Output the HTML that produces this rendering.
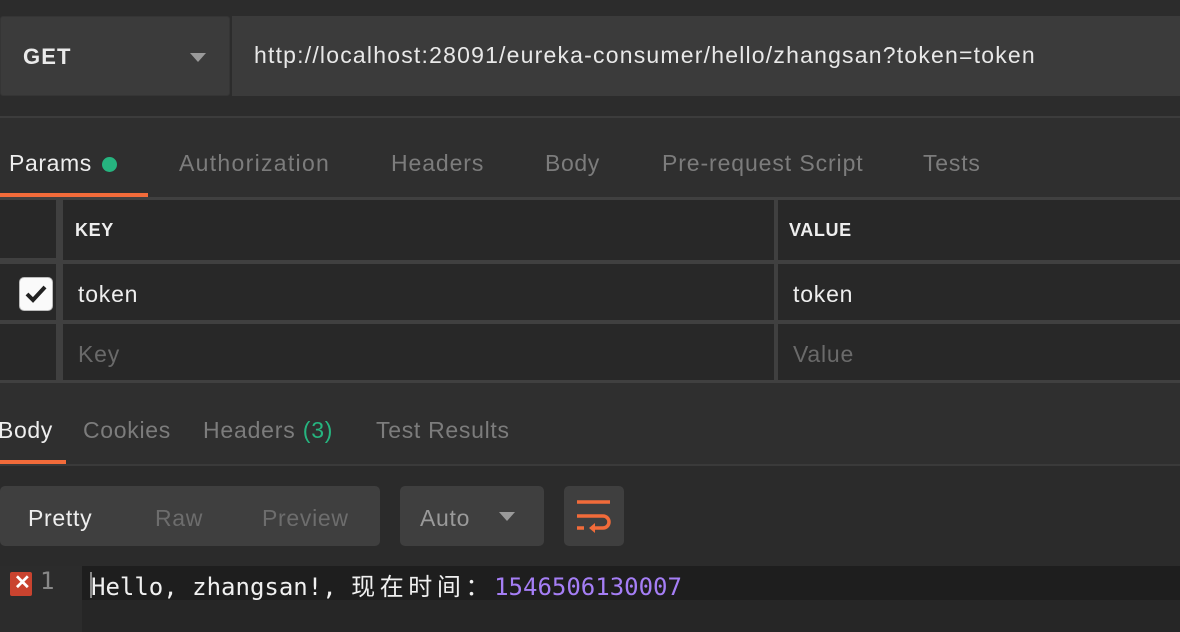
<!DOCTYPE html>
<html><head><meta charset="utf-8"><style>
*{margin:0;padding:0;box-sizing:border-box}
body{width:1180px;height:632px;background:#2f2f2f;font-family:"Liberation Sans","Noto Sans CJK SC",sans-serif;position:relative;overflow:hidden;color:#eee}
.a{position:absolute}
.t{position:absolute;font-size:23px;white-space:nowrap;letter-spacing:1.1px}
</style></head><body>
<div class="a" style="left:0;top:0;width:1180px;height:116px;background:#2c2c2c"></div>
<div class="a" style="left:0;top:16px;width:230px;height:80px;background:#3b3b3b;border:1px solid #353535;border-radius:3px"></div>
<div class="t" style="left:23px;top:44px;font-weight:bold;font-size:22px;color:#eaeaea">GET</div>
<div class="a" style="left:190px;top:53px;border-left:8px solid transparent;border-right:8px solid transparent;border-top:9px solid #9a9a9a"></div>
<div class="a" style="left:232px;top:16px;width:960px;height:80px;background:#3b3b3b"></div>
<div class="t" style="left:254px;top:42px;color:#e8e8e8;letter-spacing:1.2px">http://localhost:28091/eureka-consumer/hello/zhangsan?token=token</div>
<div class="a" style="left:0;top:116px;width:1180px;height:2px;background:#3c3c3c"></div>
<div class="t" style="left:9px;top:150px;color:#eee;letter-spacing:0.6px">Params</div>
<div class="a" style="left:102px;top:157px;width:15px;height:15px;border-radius:50%;background:#26b47f"></div>
<div class="t" style="left:179px;top:150px;color:#7c7c7c;letter-spacing:1.3px">Authorization</div>
<div class="t" style="left:391px;top:150px;color:#7c7c7c;letter-spacing:0.9px">Headers</div>
<div class="t" style="left:545px;top:150px;color:#7c7c7c;letter-spacing:0.6px">Body</div>
<div class="t" style="left:662px;top:150px;color:#7c7c7c;letter-spacing:0.9px">Pre-request Script</div>
<div class="t" style="left:923px;top:150px;color:#7c7c7c;letter-spacing:0.8px">Tests</div>
<div class="a" style="left:0;top:193px;width:148px;height:4px;background:#f26b3a"></div>
<div class="a" style="left:0;top:197px;width:1180px;height:186px;background:#404040"></div>
<div class="a" style="left:0;top:200px;width:56px;height:58px;background:#282828"></div>
<div class="a" style="left:63px;top:200px;width:711px;height:60px;background:#282828"></div>
<div class="a" style="left:778px;top:200px;width:402px;height:60px;background:#282828"></div>
<div class="a" style="left:0;top:264px;width:56px;height:56px;background:#282828"></div>
<div class="a" style="left:63px;top:264px;width:711px;height:56px;background:#282828"></div>
<div class="a" style="left:778px;top:264px;width:402px;height:56px;background:#282828"></div>
<div class="a" style="left:0;top:324px;width:56px;height:56px;background:#282828"></div>
<div class="a" style="left:63px;top:324px;width:711px;height:56px;background:#282828"></div>
<div class="a" style="left:778px;top:324px;width:402px;height:56px;background:#282828"></div>
<div class="t" style="left:75px;top:220px;font-size:18px;font-weight:bold;color:#eee;letter-spacing:0.6px">KEY</div>
<div class="t" style="left:789px;top:220px;font-size:18px;font-weight:bold;color:#eee;letter-spacing:0.6px">VALUE</div>
<div class="a" style="left:19px;top:277px;width:34px;height:34px;background:#fafafa;border-radius:5px;border:1px solid #bbb"></div>
<svg class="a" style="left:19px;top:277px" width="34" height="34"><path d="M8 17 L14 23 L26 10" stroke="#222" stroke-width="4" fill="none"/></svg>
<div class="t" style="left:78px;top:281px;color:#eee;letter-spacing:0.8px">token</div>
<div class="t" style="left:793px;top:281px;color:#eee;letter-spacing:0.8px">token</div>
<div class="t" style="left:78px;top:341px;color:#6a6a6a;letter-spacing:0.8px">Key</div>
<div class="t" style="left:793px;top:341px;color:#6a6a6a;letter-spacing:0.8px">Value</div>
<div class="t" style="left:-2px;top:417px;color:#eee;letter-spacing:0.6px">Body</div>
<div class="t" style="left:83px;top:417px;color:#7c7c7c;letter-spacing:0.7px">Cookies</div>
<div class="t" style="left:203px;top:417px;color:#7c7c7c;letter-spacing:0.8px">Headers <span style="color:#26b47f">(3)</span></div>
<div class="t" style="left:376px;top:417px;color:#7c7c7c;letter-spacing:0.7px">Test Results</div>
<div class="a" style="left:0;top:460px;width:66px;height:4px;background:#f26b3a"></div>
<div class="a" style="left:0;top:464px;width:1180px;height:2px;background:#3a3a3a"></div>
<div class="a" style="left:0;top:466px;width:1180px;height:100px;background:#2b2b2b"></div>
<div class="a" style="left:0;top:486px;width:380px;height:60px;background:#3f3f3f;border-radius:5px"></div>
<div class="t" style="left:28px;top:505px;color:#eee;letter-spacing:0.7px">Pretty</div>
<div class="t" style="left:155px;top:505px;color:#6d6d6d;letter-spacing:0.7px">Raw</div>
<div class="t" style="left:262px;top:505px;color:#6d6d6d;letter-spacing:0.7px">Preview</div>
<div class="a" style="left:400px;top:486px;width:144px;height:60px;background:#3f3f3f;border-radius:5px"></div>
<div class="t" style="left:420px;top:505px;color:#9a9a9a;letter-spacing:0.7px">Auto</div>
<div class="a" style="left:499px;top:512px;border-left:8px solid transparent;border-right:8px solid transparent;border-top:9px solid #9a9a9a"></div>
<div class="a" style="left:564px;top:486px;width:60px;height:60px;background:#3f3f3f;border-radius:5px"></div>
<svg class="a" style="left:564px;top:486px" width="60" height="60"><g stroke="#f26b3a" stroke-width="3.5" fill="none"><path d="M13 16 H46"/><path d="M13 30 H39 a6 6 0 0 1 0 12 H30"/><path d="M13 42 H20"/></g><path d="M31 37 L25 42 L31 47 Z" fill="#f26b3a"/></svg>
<div class="a" style="left:0;top:566px;width:1180px;height:66px;background:#262626"></div>
<div class="a" style="left:0;top:566px;width:82px;height:66px;background:#2c2c2c"></div>
<div class="a" style="left:82px;top:566px;width:1098px;height:34px;background:#1e1e1e"></div>
<div class="a" style="left:10px;top:572px;width:22px;height:24px;background:#c9432f;border-radius:2px"></div>
<div class="t" style="left:14px;top:570px;font-size:20px;font-weight:bold;color:#fff;letter-spacing:0">✕</div>
<div class="t" style="left:40px;top:567px;font-size:24px;color:#888;font-family:'DejaVu Sans Mono',monospace;letter-spacing:0">1</div>
<div class="a" style="left:90px;top:572px;width:2px;height:26px;background:#888"></div>
<div class="t" style="left:91px;top:567px;font-size:24px;color:#f0f0f0;font-family:'DejaVu Sans Mono','Noto Sans CJK SC',monospace;letter-spacing:0">Hello, zhangsan!, <span style="letter-spacing:4.6px">现在时间：</span><span style="color:#a57ef5">1546506130007</span></div>
</body></html>
